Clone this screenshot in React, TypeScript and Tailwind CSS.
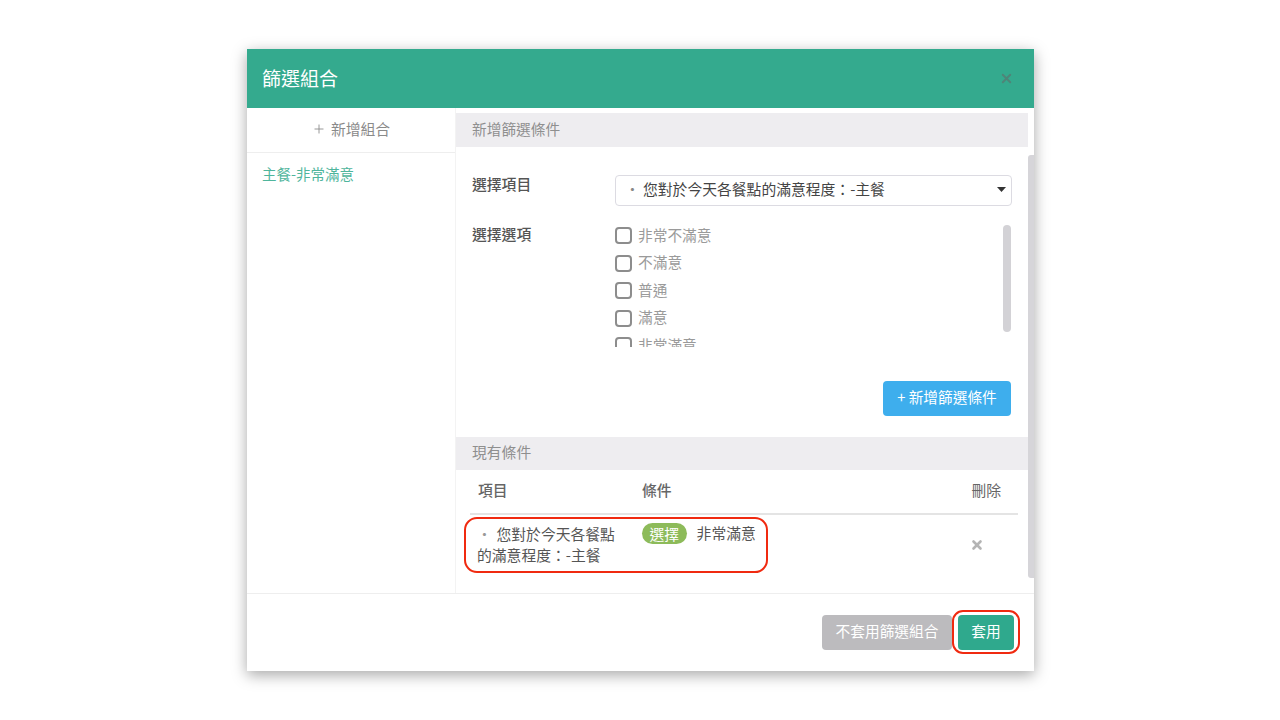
import React from 'react';
import { Plus, X } from 'lucide-react';

const options = ['非常不滿意', '不滿意', '普通', '滿意', '非常滿意'];

export default function App() {
  return (
    <div
      className="h-[720px] w-[1280px] overflow-hidden bg-white pl-[247px] pt-[49px] text-[14.8px] text-[#555]"
      style={{ fontFamily: '"Noto Sans CJK TC", "Noto Sans", sans-serif' }}
    >
      <div className="flex h-[622px] w-[787px] flex-col bg-white shadow-[0_4px_14px_rgba(0,0,0,0.35)]">
        {/* Header */}
        <div className="flex h-[59px] shrink-0 items-center justify-between bg-[#34aa8e] pl-[15px] pr-[20px]">
          <h1 className="text-[19px] font-normal text-white">篩選組合</h1>
          <X size={15} strokeWidth={3} className="text-[#4f8578]" />
        </div>

        {/* Body */}
        <div className="flex h-[485px] shrink-0">
          {/* Left list */}
          <div className="w-[209px] shrink-0 border-r border-[#f3f3f3]">
            <div className="flex h-[45px] items-center justify-center gap-[5px] border-b border-[#eeeeee] pb-[2px] text-[#8a8a8a]">
              <Plus size={14} strokeWidth={1.5} />
              <span>新增組合</span>
            </div>
            <div className="pl-[15px] pt-[10px] text-[14.5px] text-[#4fb59c]">主餐-非常滿意</div>
          </div>

          {/* Right panel */}
          <div className="flex flex-1">
            <div className="w-[572px] shrink-0 pt-[5px]">
              <div className="flex h-[34px] items-center bg-[#eeedf0] pb-[2px] pl-4 text-[14.7px] text-[#8f8f8f]">新增篩選條件</div>

              <div className="flex h-[290px] flex-col px-4 pt-[28px]">
                <div className="flex items-start">
                  <div className="w-[143px] font-medium leading-[18px] text-[#555]">選擇項目</div>
                  <div className="flex h-[31px] w-[397px] items-center justify-between rounded-[4px] border border-[#dcdbe2] pb-[2px] pl-[9px] pr-[5px] text-[#444]">
                    <span>
                      <span className="inline-block w-[18px] text-[#888]">·</span>您對於今天各餐點的滿意程度：-主餐
                    </span>
                    <svg width="9" height="5" viewBox="0 0 9 5">
                      <path d="M0 0h9L4.5 5z" fill="#333" />
                    </svg>
                  </div>
                </div>

                <div className="mt-[18px] flex">
                  <div className="w-[143px] font-medium leading-[20px] text-[#555]">選擇選項</div>
                  <div className="flex h-[123px] w-[396px] justify-between overflow-hidden">
                    <div className="-mt-[2px] flex flex-col">
                      {options.map((o) => (
                        <div key={o} className="flex h-[27.5px] shrink-0 items-center gap-[6px] text-[14.7px] text-[#9a9a9a]">
                          <span className="h-[17px] w-[17px] rounded-[4px] border-2 border-[#8d8d8d]" />
                          <span className="pb-[2px]">{o}</span>
                        </div>
                      ))}
                    </div>
                    <div className="mt-px h-[107px] w-[8px] rounded-full bg-[#d3d2d6]" />
                  </div>
                </div>

                <div className="mt-[34px] flex w-[539px] justify-end">
                  <button className="h-[35px] w-[128px] rounded-[4px] bg-[#3eaeed] pb-[2px] text-[14.7px] text-white">+ 新增篩選條件</button>
                </div>
              </div>

              <div className="flex h-[33px] items-center bg-[#eeedf0] pb-[2px] pl-4 text-[#8f8f8f]">現有條件</div>

              {/* Conditions table */}
              <div className="ml-[14px] mr-[10px] flex h-[45px] items-center border-b-2 border-[#e4e4e4] pb-[3px] pl-2 pr-[17px] text-[#666]">
                <div className="w-[164px] font-medium">項目</div>
                <div className="flex-1 font-medium">條件</div>
                <div className="font-normal">刪除</div>
              </div>
              <div className="flex pl-[21px] pt-[8px]">
                <div className="relative flex h-[47px] w-[507px]">
                  <div className="w-[165px] pr-[20px] leading-[21px] text-[#555]">
                    <span className="inline-block w-[19.5px] text-[#999]">·</span>您對於今天各餐點的滿意程度：-主餐
                  </div>
                  <div className="flex h-[21px] flex-1 items-center gap-[10px]">
                    <span className="rounded-full bg-[#8dbb5a] px-[7.5px] leading-[21px] text-white">選擇</span>
                    <span>非常滿意</span>
                  </div>
                  <div className="flex h-[44px] items-center">
                    <X size={14} strokeWidth={4.5} className="text-[#b4b4b4]" />
                  </div>
                  {/* Red annotation around the condition */}
                  <div className="absolute left-[-13px] top-[-6px] h-[56px] w-[304px] rounded-[13px] border-2 border-[#f02a10]" />
                </div>
              </div>
            </div>
            <div className="mt-[47px] h-[423px] w-[6px] rounded-l-[3px] bg-[#d6d5d9]" />
          </div>
        </div>

        {/* Footer */}
        <div className="flex flex-1 justify-end gap-[6px] border-t border-[#eeeeee] pr-5 pt-[21px] text-[14.7px]">
          <button className="h-[35px] w-[130px] rounded-[4px] bg-[#bcbbbe] pb-[2px] text-white">不套用篩選組合</button>
          <div className="relative">
            <button className="h-[35px] w-[56px] rounded-[4px] bg-[#2fa98d] pb-[2px] text-white">套用</button>
            <div className="absolute left-[-6px] top-[-5px] h-[44px] w-[68px] rounded-[11px] border-2 border-[#f02a10]" />
          </div>
        </div>
      </div>
    </div>
  );
}
